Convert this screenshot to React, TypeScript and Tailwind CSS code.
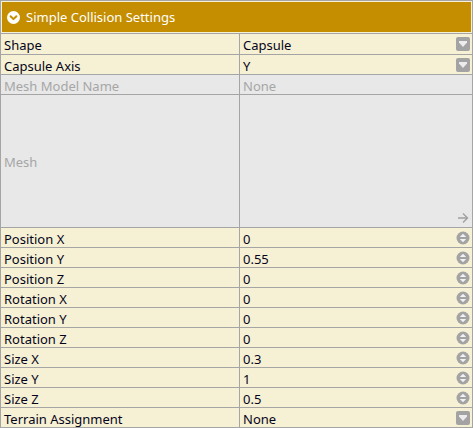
import React from "react";

type Row = {
  label: string;
  value: string;
  kind: "select" | "spin" | "none";
  disabled?: boolean;
};

const rowsTop: Row[] = [
  { label: "Shape", value: "Capsule", kind: "select" },
  { label: "Capsule Axis", value: "Y", kind: "select" },
  { label: "Mesh Model Name", value: "None", kind: "none", disabled: true },
];

const rowsBottom: Row[] = [
  { label: "Position X", value: "0", kind: "spin" },
  { label: "Position Y", value: "0.55", kind: "spin" },
  { label: "Position Z", value: "0", kind: "spin" },
  { label: "Rotation X", value: "0", kind: "spin" },
  { label: "Rotation Y", value: "0", kind: "spin" },
  { label: "Rotation Z", value: "0", kind: "spin" },
  { label: "Size X", value: "0.3", kind: "spin" },
  { label: "Size Y", value: "1", kind: "spin" },
  { label: "Size Z", value: "0.5", kind: "spin" },
  { label: "Terrain Assignment", value: "None", kind: "select" },
];

function SelectIcon() {
  return (
    <svg width="14" height="14" viewBox="0 0 14 14" className="shrink-0">
      <rect x="0" y="0" width="14" height="14" rx="2" fill="#a3a3a3" />
      <path d="M3 4 H11 V5.5 L7 10 L3 5.5 Z" fill="#ececec" />
    </svg>
  );
}

function SpinIcon() {
  return (
    <svg width="14" height="14" viewBox="0 0 14 14" className="shrink-0">
      <circle cx="7" cy="7" r="6.5" fill="#a3a3a3" />
      <path d="M7 2.8 L10.2 6 H3.8 Z" fill="#f2f2f2" />
      <path d="M3.8 8 H10.2 L7 11.2 Z" fill="#f2f2f2" />
    </svg>
  );
}

function HeaderIcon() {
  return (
    <svg width="13" height="13" viewBox="0 0 13 13" className="shrink-0">
      <circle cx="6.5" cy="6.5" r="6.5" fill="#ffffff" />
      <path
        d="M3.6 5.2 L6.5 8.1 L9.4 5.2"
        fill="none"
        stroke="#c48e00"
        strokeWidth="2"
        strokeLinecap="round"
        strokeLinejoin="round"
      />
    </svg>
  );
}

function PropRow({ row, first }: { row: Row; first?: boolean }) {
  const bg = row.disabled ? "bg-[#e8e8e8]" : "bg-[#f6f0d4]";
  const text = row.disabled ? "text-[#a6a6a6]" : "text-[#05051a]";
  return (
    <div
      className={`grid grid-cols-[239px_1fr] border-b border-[#a5a5a5] ${bg} ${text} ${
        first ? "h-[21px]" : "h-[20px]"
      }`}
    >
      <div className="flex items-center border-r border-[#a5a5a5] pl-[3px] pt-[3px] leading-none">
        {row.label}
      </div>
      <div className="flex items-center justify-between pl-[3px] pr-[2px] leading-none">
        <span className="pt-[3px]">{row.value}</span>
        {row.kind === "select" && <SelectIcon />}
        {row.kind === "spin" && <SpinIcon />}
      </div>
    </div>
  );
}

export default function App() {
  return (
    <div
      className="w-[473px] h-[428px] bg-white text-[13px] overflow-hidden"
      style={{ fontFamily: '"Noto Sans", "DejaVu Sans", sans-serif' }}
    >
      <div className="border border-[#a5a5a5] bg-[#f6f0d4] h-full flex flex-col">
        <div className="p-px">
          <div className="h-[30px] bg-[#c48e00] flex items-center gap-[6px] pl-[5px] text-white">
            <HeaderIcon />
            <span className="leading-none pt-[1px]">Simple Collision Settings</span>
          </div>
        </div>
        <div className="border-t border-[#a5a5a5]">
          {rowsTop.map((r, i) => (
            <PropRow key={r.label} row={r} first={i === 0} />
          ))}
          <div className="grid grid-cols-[239px_1fr] h-[133px] border-b border-[#a5a5a5] bg-[#e8e8e8] text-[#a6a6a6]">
            <div className="flex items-center border-r border-[#a5a5a5] pl-[3px] pt-[3px] leading-none">
              Mesh
            </div>
            <div className="flex items-end justify-end pr-[3px] pb-[3px]">
              <svg width="12" height="12" viewBox="0 0 12 12">
                <path
                  d="M1 6 H10.5 M6 1.5 L10.5 6 L6 10.5"
                  fill="none"
                  stroke="#a0a0a0"
                  strokeWidth="1.4"
                />
              </svg>
            </div>
          </div>
          {rowsBottom.map((r) => (
            <PropRow key={r.label} row={r} />
          ))}
        </div>
      </div>
    </div>
  );
}
